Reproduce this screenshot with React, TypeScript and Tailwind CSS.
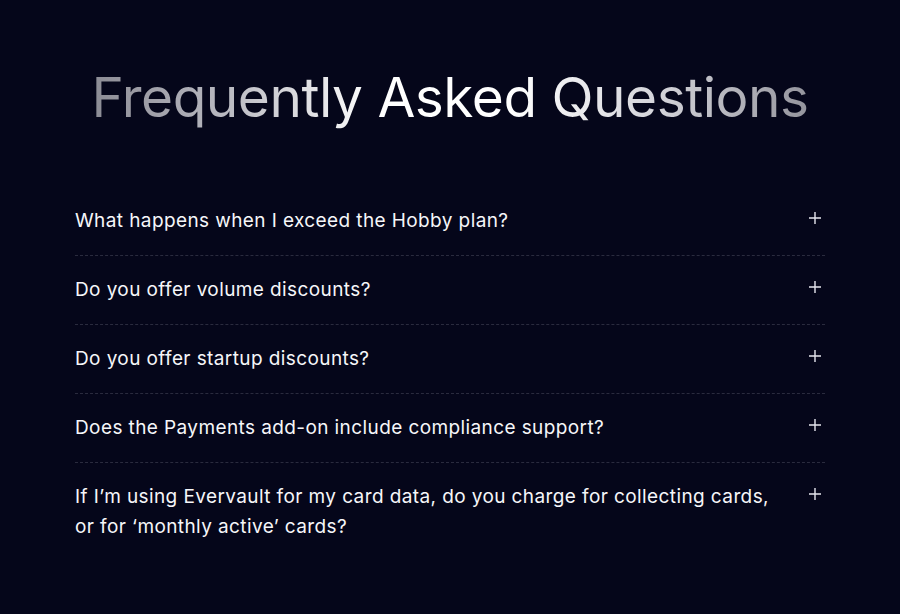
const QUESTIONS = [
  "What happens when I exceed the Hobby plan?",
  "Do you offer volume discounts?",
  "Do you offer startup discounts?",
  "Does the Payments add-on include compliance support?",
  "If I\u2019m using Evervault for my card data, do you charge for collecting cards, or for \u2018monthly active\u2019 cards?",
];

function PlusIcon() {
  return (
    <svg width="14" height="14" viewBox="0 0 14 14" fill="none" className="shrink-0 text-[#e6e6ee]">
      <path d="M7 1v12M1 7h12" stroke="currentColor" strokeWidth="1.4" />
    </svg>
  );
}

export default function App() {
  return (
    <div className="min-h-[614px] bg-[#05061a] font-['Inter',sans-serif] text-white">
      <div className="mx-auto w-[750px] pt-[62px]">
        <h2 className="bg-[linear-gradient(90deg,#86868f_0%,#b9b9c1_20%,#ffffff_40%,#ffffff_58%,#d3d3d9_78%,#8d8d96_100%)] bg-clip-text text-center text-[55px] leading-[70px] font-normal tracking-[-0.5px] text-transparent">
          Frequently Asked Questions
        </h2>

        <div className="mt-[55px]">
          {QUESTIONS.map((q, i) => (
            <div
              key={q}
              className={`flex items-start justify-between gap-8 py-[19px] ${
                i < QUESTIONS.length - 1 ? "border-b border-dashed border-[#2a2b3e]" : ""
              }`}
            >
              <p className="text-[19px] leading-[30px] tracking-[0.4px] text-[#f6f6f9]">{q}</p>
              <div className="mt-[5px] mr-[3px]">
                <PlusIcon />
              </div>
            </div>
          ))}
        </div>
      </div>
    </div>
  );
}
